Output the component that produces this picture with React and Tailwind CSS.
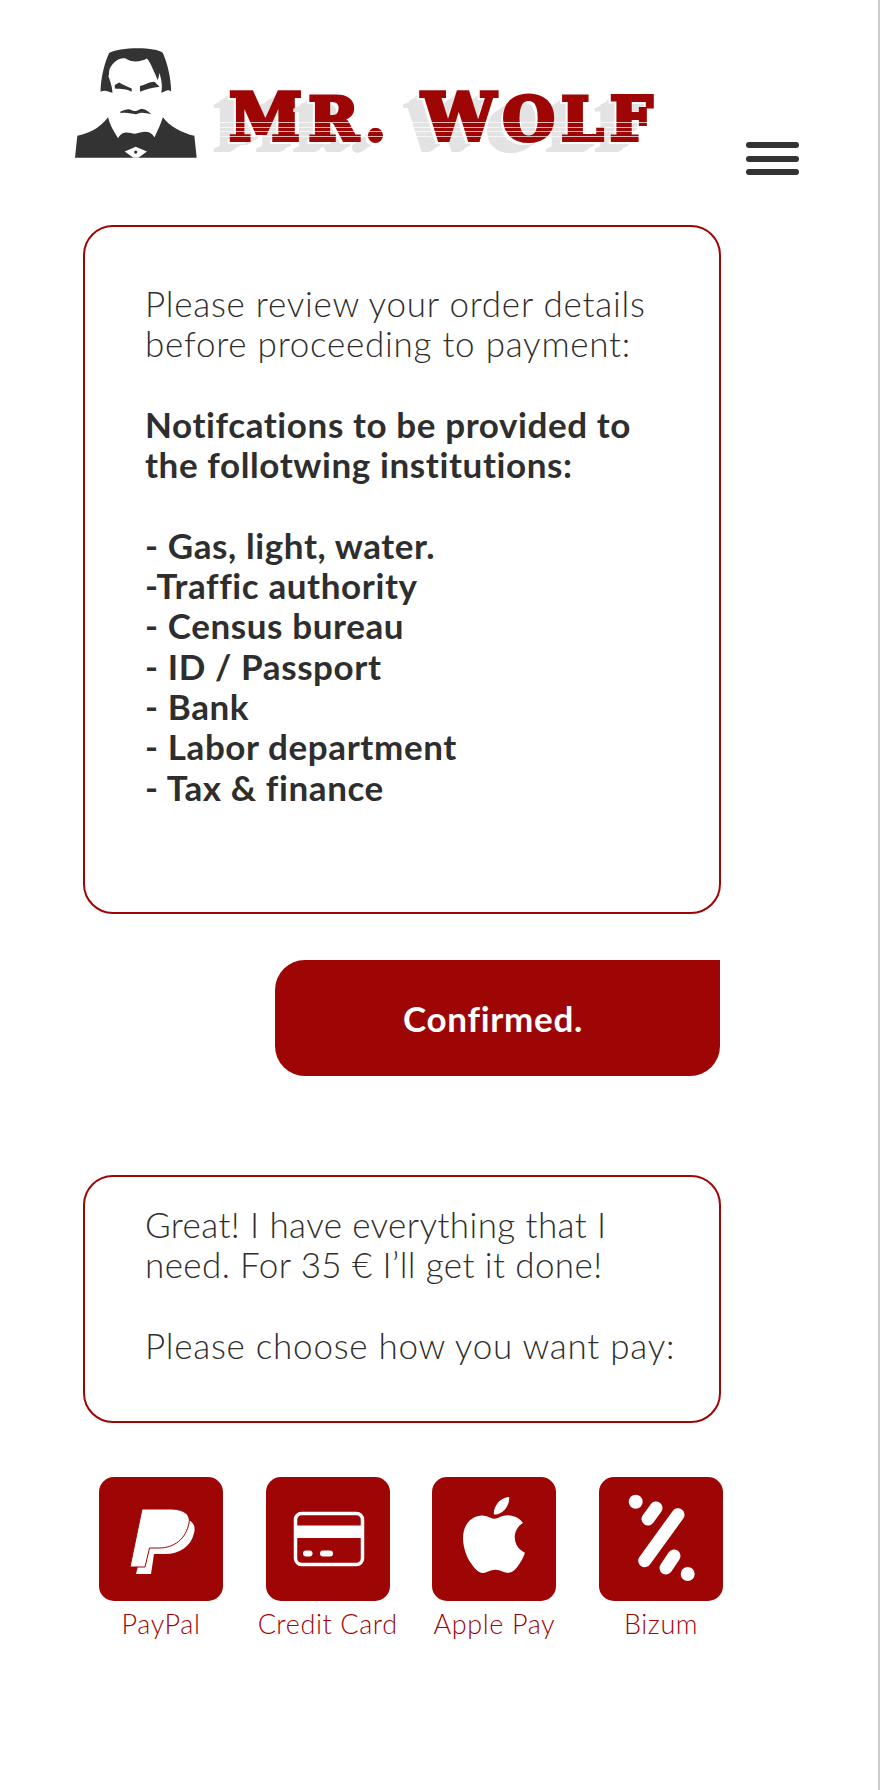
import { SiApple } from "react-icons/si";

function WolfFigure() {
  return (
    <svg viewBox="45 54 368 330" className="w-[122px] h-[110px] shrink-0" fill="#333333">
      {/* hair */}
      <path d="M148 68 C175 50 290 48 310 68 C322 95 335 140 335 185 C325 175 318 185 305 188 C310 165 305 150 300 128 C298 140 295 150 295 150 C285 130 275 100 262 85 C245 95 215 98 198 85 C180 80 160 95 150 115 C145 130 150 140 145 135 C150 150 158 170 158 188 C145 185 135 178 122 185 C123 140 135 95 148 68 Z" />
      {/* brows */}
      <path d="M165 165 L178 157 C190 165 205 170 216 175 L216 185 C200 175 185 178 165 175 Z" />
      <path d="M241 168 C255 165 270 155 285 155 L300 170 C280 172 260 178 241 185 Z" />
      {/* moustache */}
      <path d="M182 245 C195 240 205 235 215 240 C225 248 235 240 245 236 C255 236 268 245 276 253 C260 250 245 245 232 252 C220 255 205 245 182 250 Z" />
      {/* jacket */}
      <path d="M45 384 L52 318 C85 310 115 300 145 262 C150 285 165 310 175 325 C190 300 210 310 225 312 C245 310 265 295 285 322 C295 300 305 280 310 262 C330 290 370 310 405 318 L412 384 Z" />
      <path d="M195 365 L228 351 L262 365 L236 384 L221 384 Z" fill="#ffffff" />
      <circle cx="228" cy="367" r="5" />
    </svg>
  );
}

function Wordmark() {
  return (
    <div className="relative ml-[32px] mt-[44px] h-[50px] w-[427px] whitespace-nowrap font-['DejaVu_Serif',serif] font-bold text-[66px] leading-[50px] tracking-[6.5px] text-[#9e0505] [-webkit-text-stroke:4px_#9e0505] [text-shadow:-2px_2px_0_#fff,-3px_3px_0_#fff,-4px_4px_0_#fff,-6px_4px_0_#e3e3e3,-8px_6px_0_#e3e3e3,-10px_7px_0_#e3e3e3,-12px_8px_0_#e3e3e3,-14px_10px_0_#e3e3e3,-16px_11px_0_#e3e3e3,-18px_12px_0_#e3e3e3]">
      M<span className="text-[60px]">R.</span> W<span className="text-[60px]">OLF</span>
      {/* stripes over the lower part of the letters */}
      <div className="absolute left-[-18px] right-0 top-[30px] flex flex-col gap-[3.6px]">
        <div className="h-px bg-white/70" />
        <div className="h-px bg-white/70" />
        <div className="h-px bg-white/70" />
        <div className="h-px bg-white/70" />
      </div>
    </div>
  );
}

function PayTile({ label, children }) {
  return (
    <div className="w-[124px] flex flex-col items-center">
      <div className="w-[124px] h-[124px] rounded-[15px] bg-[#9e0505] flex items-center justify-center">
        {children}
      </div>
      <span className="mt-[7px] whitespace-nowrap text-[27px] leading-[32px] tracking-[0.6px] font-light text-[#9e0505]">{label}</span>
    </div>
  );
}

export default function App() {
  return (
    <div className="w-[880px] h-[1790px] bg-white border-r-2 border-[#cccccc] overflow-hidden font-['Lato',sans-serif] text-[#2f2e2e] [font-variant-ligatures:none]">
      {/* Header */}
      <header className="h-[225px] flex items-start pl-[75px] pt-[48px]">
        <WolfFigure />
        <Wordmark />
        <button className="ml-[90px] mt-[94px] w-[53px] flex flex-col gap-[7.3px]">
          <span className="h-[6.3px] rounded-full bg-[#333333]" />
          <span className="h-[6.3px] rounded-full bg-[#333333]" />
          <span className="h-[6.3px] rounded-full bg-[#333333]" />
        </button>
      </header>

      <main className="ml-[83px] w-[637px]">
        {/* Order review */}
        <section className="w-[638px] h-[689px] border-2 border-[#9e0505] rounded-[30px] pl-[60px] pt-[56px] text-[35px] leading-[40.3px]">
          <p className="font-light tracking-[0.75px]">Please review your order details<br />before proceeding to payment:</p>
          <br />
          <p className="font-bold tracking-[0.6px]">Notifcations to be provided to<br />the follotwing institutions:</p>
          <br />
          <p className="font-bold tracking-[0.6px]">
            - Gas, light, water.<br />
            -Traffic authority<br />
            - Census bureau<br />
            - ID / Passport<br />
            - Bank<br />
            - Labor department<br />
            - Tax &amp; finance
          </p>
        </section>

        <button className="mt-[46px] ml-[192px] w-[445px] h-[116px] bg-[#9e0505] rounded-[30px] rounded-tr-none pr-[9px] text-white font-bold text-[35px] tracking-[0.7px]">
          Confirmed.
        </button>

        {/* Payment prompt */}
        <section className="w-[638px] mt-[99px] h-[248px] border-2 border-[#9e0505] rounded-[30px] pl-[60px] pt-[27px] text-[35px] leading-[40.3px] font-light tracking-[0.75px] whitespace-nowrap">
          <p className="tracking-[0.4px]">Great! I have everything that I<br />need. For 35 € I’ll get it done!</p>
          <br />
          <p>Please choose how you want pay:</p>
        </section>

        {/* Payment methods */}
        <div className="mt-[54px] ml-[16px] flex gap-[42.7px]">
          <PayTile label="PayPal">
            <svg viewBox="0 0 124 124" className="w-[124px] h-[124px]">
              <path d="M47 40 H76 C90 40 98 46 95 56 C92 70 80 77 66 77 H55 L52 97 H37 L39 89 Z" fill="#fff" />
              <path d="M43 32 H71 C84 32 92 37 90 46 C87 62 75 71 60 71 H50.5 L46 90 H31 Z" fill="#fff" stroke="#9e0505" strokeWidth="1" />
            </svg>
          </PayTile>
          <PayTile label="Credit Card">
            <svg viewBox="0 0 124 124" className="w-[124px] h-[124px]" fill="none">
              <rect x="29.5" y="36.5" width="67" height="51" rx="6" stroke="#fff" strokeWidth="3.5" />
              <rect x="29" y="48.5" width="68" height="12.5" fill="#fff" />
              <rect x="37" y="73.5" width="9.5" height="6" rx="3" fill="#fff" />
              <rect x="54" y="73.5" width="13" height="6" rx="3" fill="#fff" />
            </svg>
          </PayTile>
          <PayTile label="Apple Pay">
            <SiApple size={76} color="#ffffff" className="mb-[8px]" />
          </PayTile>
          <PayTile label="Bizum">
            <svg viewBox="0 0 124 124" className="w-[124px] h-[124px]" fill="#fff" stroke="#fff" strokeLinecap="round">
              <circle cx="36.7" cy="24.7" r="7" stroke="none" />
              <line x1="49" y1="42" x2="57" y2="31" strokeWidth="13" />
              <line x1="79" y1="37.7" x2="45.7" y2="83.7" strokeWidth="13" />
              <line x1="75" y1="79" x2="67" y2="91" strokeWidth="13" />
              <circle cx="88.7" cy="97" r="7" stroke="none" />
            </svg>
          </PayTile>
        </div>
      </main>
    </div>
  );
}
